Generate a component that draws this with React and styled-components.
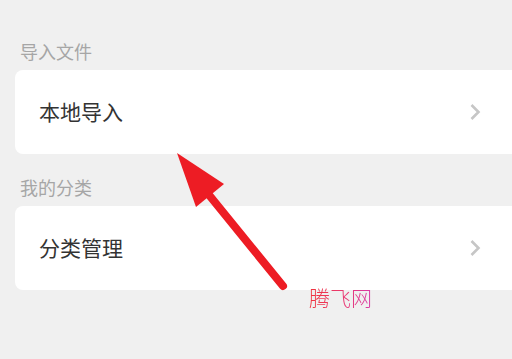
import React from "react";
import styled, { createGlobalStyle } from "styled-components";

const Global = createGlobalStyle`
  html, body { margin: 0; padding: 0; background: #f0f0f0; }
  body { font-family: "Noto Sans CJK SC", "Noto Sans", sans-serif; }
`;

const Page = styled.div`
  position: relative;
  width: 512px;
  height: 359px;
  overflow: hidden;
  background: #f0f0f0;
  padding: 18px 0 0 15px;
  box-sizing: border-box;
`;

const SectionLabel = styled.div`
  margin: 21px 0 7px 5px;
  font-size: 18px;
  line-height: 24px;
  height: 24px;
  color: #a6a6a6;
`;

const Card = styled.div`
  display: flex;
  align-items: center;
  justify-content: space-between;
  height: 84px;
  background: #ffffff;
  border-radius: 8px 0 0 8px;
  padding: 0 31px 0 24px;
`;

const CardTitle = styled.span`
  font-size: 21px;
  color: #333333;
  line-height: 1;
  margin-top: -2px;
`;

const Chevron = () => (
  <svg width="12" height="18" viewBox="0 0 12 18">
    <path d="M2.5 2 L9.5 9 L2.5 16" fill="none" stroke="#c6c6c6" strokeWidth="2.6" />
  </svg>
);

const Overlay = styled.svg`
  position: absolute;
  left: 0;
  top: 0;
  pointer-events: none;
`;

const Watermark = styled.div`
  position: absolute;
  left: 309px;
  top: 283px;
  font-size: 21px;
  line-height: 28px;
  font-family: "Noto Sans CJK SC", sans-serif;
  font-weight: 300;
  background: linear-gradient(90deg, #f0343c 0%, #e83a78 60%, #d83aa8 100%);
  -webkit-background-clip: text;
  background-clip: text;
  color: transparent;
`;

const items = [
  { label: "导入文件", title: "本地导入" },
  { label: "我的分类", title: "分类管理" },
];

export default function App() {
  return (
    <>
      <Global />
      <Page>
        {items.map((it) => (
          <React.Fragment key={it.label}>
            <SectionLabel>{it.label}</SectionLabel>
            <Card>
              <CardTitle>{it.title}</CardTitle>
              <Chevron />
            </Card>
          </React.Fragment>
        ))}
        <Overlay width="512" height="359" viewBox="0 0 512 359">
          <line x1="283" y1="286" x2="205" y2="190" stroke="#ed1c24" strokeWidth="8" strokeLinecap="round" />
          <polygon points="177,153 224,184 196,207" fill="#ed1c24" />
        </Overlay>
        <Watermark>腾飞网</Watermark>
      </Page>
    </>
  );
}
